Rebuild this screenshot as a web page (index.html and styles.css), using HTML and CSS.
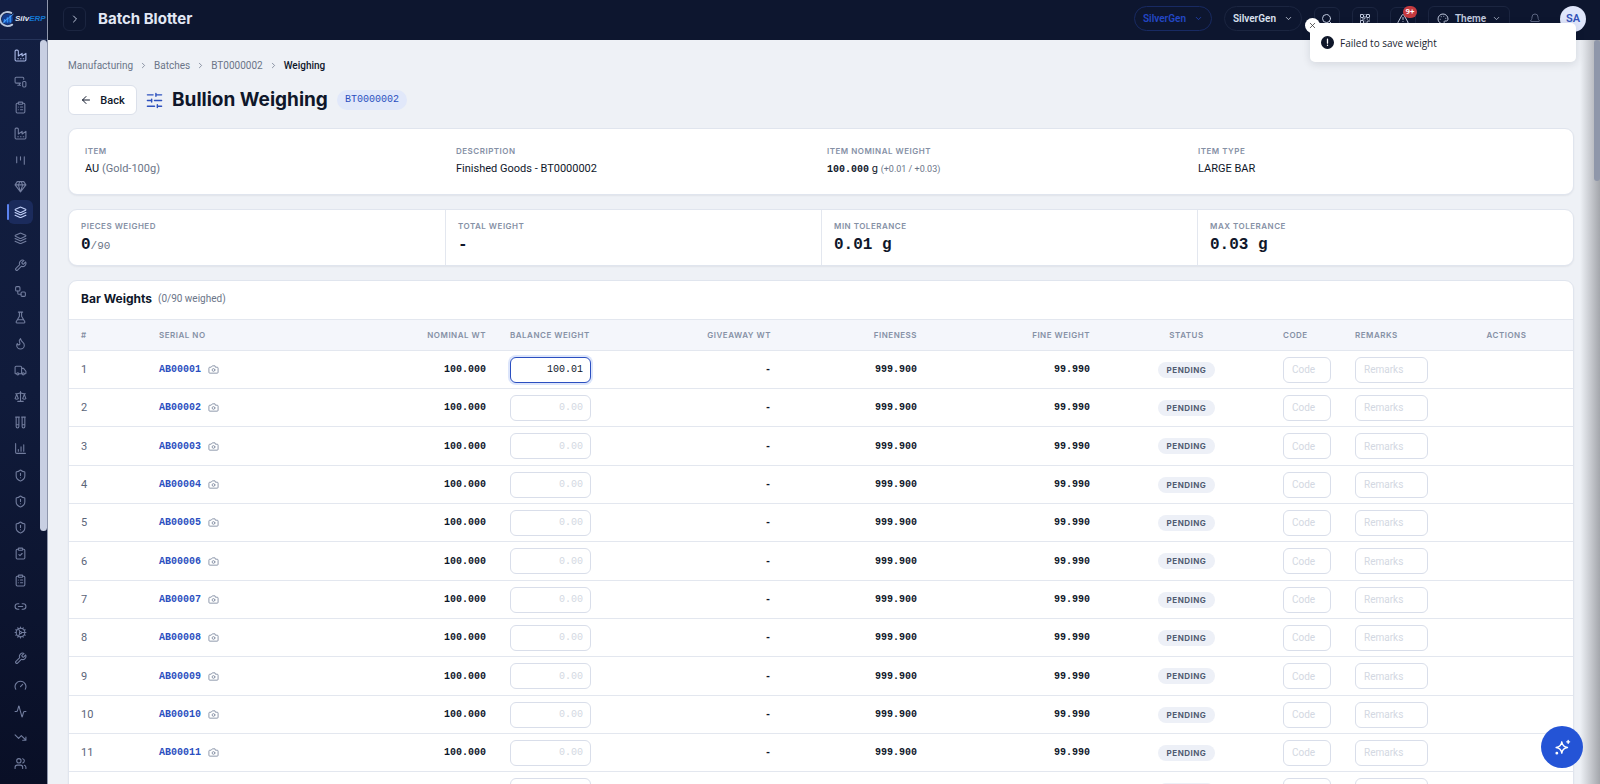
FILE: index.html
```
<!DOCTYPE html>
<html lang="en">
<head>
    <meta charset="UTF-8">
    <meta name="viewport" content="width=device-width, initial-scale=1.0">
    <title>Batch Blotter - Bullion Weighing</title>
    <link rel="stylesheet" href="styles.css">
</head>
<body>
    <aside class="sidebar">
        <a href="#" class="logo" aria-label="SilvERP">
            <svg class="logo-mark" viewBox="0 0 16 18">
                <circle cx="8" cy="9" r="6" fill="#123a8c" stroke="none"/>
                <path d="M12 2.500A8 7.500 0 1 0 13 15" fill="none" stroke="#b9c6dc" stroke-width="2"/>
                <path d="M5 12v-2M8 12V8M11 12V6" stroke="#2f8cf0" stroke-width="2"/>
                <path d="M3 13L14 4" stroke="#4da3ff" stroke-width="1"/>
            </svg>
            <span class="logo-silv">Silv</span><span class="logo-erp">ERP</span>
        </a>
        <div class="side-body">
            <nav class="side-nav" id="sideNav"></nav>
            <div class="side-scroll"><div class="side-thumb"></div></div>
        </div>
    </aside>

    <div class="page">
        <header class="topbar">
            <button class="icon-btn expand" aria-label="Expand menu"><svg viewBox="0 0 24 24"><path d="m9 18 6-6-6-6"/></svg></button>
            <div class="top-title">Batch Blotter</div>
            <div class="top-actions">
                <button class="pill pill-blue">SilverGen <svg viewBox="0 0 24 24"><path d="m6 9 6 6 6-6"/></svg></button>
                <button class="pill">SilverGen <svg viewBox="0 0 24 24"><path d="m6 9 6 6 6-6"/></svg></button>
                <button class="icon-btn" aria-label="Search"><svg viewBox="0 0 24 24"><circle cx="11" cy="11" r="8"/><path d="m21 21-4.300-4.300"/></svg></button>
                <button class="icon-btn" aria-label="Scan"><svg viewBox="0 0 24 24"><rect x="3" y="3" width="6" height="6" rx="1"/><rect x="15" y="3" width="6" height="6" rx="1"/><rect x="3" y="15" width="6" height="6" rx="1"/><path d="M21 16h-3a2 2 0 0 0-2 2v3M21 21v.01M12 7v3a2 2 0 0 1-2 2H7M3 12h.01M12 3h.01M12 16v.01M16 12h1M21 12v.01M12 21v-1"/></svg></button>
                <button class="icon-btn" aria-label="Alerts"><svg viewBox="0 0 24 24"><path d="m21.730 18-8-14a2 2 0 0 0-3.480 0l-8 14A2 2 0 0 0 4 21h16a2 2 0 0 0 1.730-3M12 9v4M12 17h.01"/></svg><span class="badge">9+</span></button>
                <button class="theme-btn"><svg viewBox="0 0 24 24"><path d="M12 22a10 10 0 1 1 10-10c0 3-2 4-4 4h-2a2 2 0 0 0-1.500 3.300c.8 1 .2 2.700-2.500 2.700z"/><path d="M13.500 6.500v.01M17.500 10.500v.01M6.500 12.500v.01M8.500 7.500v.01"/></svg>Theme<svg viewBox="0 0 24 24"><path d="m6 9 6 6 6-6"/></svg></button>
                <button class="bell" aria-label="Notifications"><svg viewBox="0 0 24 24"><path d="M10.300 21a2 2 0 0 0 3.400 0M3.300 15.300A1 1 0 0 0 4 17h16a1 1 0 0 0 .7-1.700C19.400 14 18 12.500 18 8A6 6 0 0 0 6 8c0 4.500-1.400 6-2.700 7.300"/></svg></button>
                <button class="avatar">SA</button>
            </div>
        </header>

        <main class="content">
            <nav class="breadcrumb" aria-label="Breadcrumb">
                <a href="#">Manufacturing</a><svg viewBox="0 0 24 24"><path d="m9 18 6-6-6-6"/></svg>
                <a href="#">Batches</a><svg viewBox="0 0 24 24"><path d="m9 18 6-6-6-6"/></svg>
                <a href="#">BT0000002</a><svg viewBox="0 0 24 24"><path d="m9 18 6-6-6-6"/></svg>
                <span class="current">Weighing</span>
            </nav>

            <div class="heading">
                <button class="back-btn"><svg viewBox="0 0 24 24"><path d="m12 19-7-7 7-7M19 12H5"/></svg>Back</button>
                <svg class="heading-icon" viewBox="0 0 24 24"><path d="M10 4H2M22 4h-8M14 2v4M8 12H2M22 12H12M8 10v4M12 20H2M22 20h-6M16 18v4"/></svg>
                <h1>Bullion Weighing</h1>
                <span class="batch-tag">BT0000002</span>
            </div>

            <section class="card info">
                <div><div class="label">ITEM</div><div class="value">AU <span class="muted">(Gold-100g)</span></div></div>
                <div><div class="label">DESCRIPTION</div><div class="value">Finished Goods - BT0000002</div></div>
                <div><div class="label">ITEM NOMINAL WEIGHT</div><div class="value"><span class="mono">100.000</span> g <small>(+0.01 / +0.03)</small></div></div>
                <div><div class="label">ITEM TYPE</div><div class="value">LARGE BAR</div></div>
            </section>

            <section class="card stats">
                <div><div class="label">PIECES WEIGHED</div><div class="stat">0<small>/90</small></div></div>
                <div><div class="label">TOTAL WEIGHT</div><div class="stat">-</div></div>
                <div><div class="label">MIN TOLERANCE</div><div class="stat">0.01 g</div></div>
                <div><div class="label">MAX TOLERANCE</div><div class="stat">0.03 g</div></div>
            </section>

            <section class="card bars">
                <div class="bars-head"><h2>Bar Weights</h2><span>(0/90 weighed)</span></div>
                <table>
                    <thead>
                        <tr>
                            <th class="c-no">#</th>
                            <th class="c-serial">SERIAL NO</th>
                            <th class="c-nominal num">NOMINAL WT</th>
                            <th class="c-balance">BALANCE WEIGHT</th>
                            <th class="c-give num">GIVEAWAY WT</th>
                            <th class="c-fineness num">FINENESS</th>
                            <th class="c-fine num">FINE WEIGHT</th>
                            <th class="c-status mid">STATUS</th>
                            <th class="c-code">CODE</th>
                            <th class="c-remarks">REMARKS</th>
                            <th class="c-actions mid">ACTIONS</th>
                        </tr>
                    </thead>
                    <tbody id="barRows"></tbody>
                </table>
            </section>
        </main>
        <div class="page-scroll"><div class="page-thumb"></div></div>
    </div>

    <div class="toast" role="alert">
        <button class="toast-close" aria-label="Close"><svg viewBox="0 0 24 24"><path d="M18 6 6 18M6 6l12 12"/></svg></button>
        <svg class="toast-icon" viewBox="0 0 20 20"><circle cx="10" cy="10" r="9"/><path d="M10 5v6M10 14v.5"/></svg>
        <span>Failed to save weight</span>
    </div>

    <button class="assist" aria-label="Assistant"><svg viewBox="0 0 24 24"><path d="M11 4c.8 5.300 2.700 7.200 8 8-5.300.8-7.200 2.700-8 8-.8-5.300-2.700-7.200-8-8 5.300-.8 7.200-2.700 8-8zM20 2v4M22 4h-4"/><circle cx="4" cy="20" r="1"/></svg></button>

    <script src="script.js"></script>
</body>
</html>
```
FILE: styles.css
```
* {
    box-sizing: border-box;
}

body {
    margin: 0;
    height: 100vh;
    display: flex;
    overflow: hidden;
    background-color: #eef1f6;
    color: #0f172a;
    font-family: 'Roboto', sans-serif;
    font-size: 11px;
}

button, input {
    font-family: inherit;
    margin: 0;
}

button {
    cursor: pointer;
}

svg {
    fill: none;
    stroke: currentColor;
    stroke-width: 2;
    stroke-linecap: round;
    stroke-linejoin: round;
    flex: none;
}

a {
    color: inherit;
    text-decoration: none;
}

h1, h2 {
    margin: 0;
    font-family: 'Inter', sans-serif;
    font-weight: 700;
}

/* Sidebar */
.sidebar {
    width: 48px;
    flex: none;
    display: flex;
    flex-direction: column;
    background: linear-gradient(#131f42, #101b3b 50%, #090f26);
    border-right: 1px solid #8f97ac;
}

.logo {
    height: 40px;
    flex: none;
    display: flex;
    align-items: center;
    padding-bottom: 2px;
    border-bottom: 1px solid #26345a;
    background-color: #131e41;
    font-family: 'Liberation Sans', sans-serif;
    font-size: 8px;
    font-style: italic;
    font-weight: 700;
}

.logo-mark {
    width: 15px;
    height: 18px;
}

.logo-silv {
    color: #e2e8f3;
}

.logo-erp {
    color: #1478d4;
}

.side-body {
    flex: 1;
    min-height: 0;
    display: flex;
}

.side-nav {
    flex: 1;
    overflow: hidden;
    padding: 3px 0 0 8px;
}

.side-link {
    position: relative;
    display: flex;
    align-items: center;
    justify-content: center;
    width: 25px;
    height: 24px;
    margin-bottom: 2px;
    border-radius: 6px;
    color: #727d9e;
}

.side-link:nth-child(4n) {
    margin-bottom: 3px;
}

.side-link svg {
    width: 13px;
    height: 13px;
}

.side-link.open {
    color: #a9b8e6;
}

.side-link.active {
    background-color: #1b2b5c;
    color: #c3d1fa;
}

.side-link.active::before {
    content: "";
    position: absolute;
    left: -1px;
    top: 4px;
    width: 2px;
    height: 16px;
    border-radius: 2px;
    background-color: #5b83f0;
}

.side-scroll {
    width: 7px;
}

.side-thumb {
    height: 66%;
    border-radius: 4px;
    background-color: #c8cfe2;
}

/* Top bar */
.page {
    flex: 1;
    min-width: 0;
    position: relative;
    display: flex;
    flex-direction: column;
}

.topbar {
    height: 40px;
    flex: none;
    display: flex;
    align-items: center;
    padding: 0 14px 3px 15px;
    background-color: #0d162f;
    color: #e2e8f5;
}

.topbar button {
    display: flex;
    align-items: center;
    justify-content: center;
    background: none;
    color: #c0c9de;
    border: 1px solid #1b2540;
    font-size: 10px;
    font-weight: 600;
    padding: 0;
}

.topbar svg {
    width: 12px;
    height: 12px;
}

.topbar .icon-btn {
    position: relative;
    width: 26px;
    height: 24px;
    border-radius: 6px;
}

.topbar .expand {
    width: 23px;
}

.top-title {
    margin-left: 12px;
    font-family: 'Inter', sans-serif;
    font-size: 15px;
    font-weight: 700;
}

.top-actions {
    margin-left: auto;
    display: flex;
    align-items: center;
    gap: 12px;
}

.topbar .pill {
    height: 25px;
    width: 78px;
    gap: 8px;
    border-radius: 13px;
    color: #dbe2f0;
}

.topbar .pill svg, .theme-btn svg:last-child {
    width: 9px;
    height: 9px;
}

.topbar .pill-blue {
    color: #2347c5;
    border-color: #182a62;
}

.topbar .theme-btn {
    width: 82px;
    height: 26px;
    gap: 6px;
    border-radius: 6px;
}

.badge {
    position: absolute;
    top: -2px;
    right: -2px;
    min-width: 14px;
    height: 12px;
    border-radius: 6px;
    background-color: #c53a3f;
    color: #fff;
    font-size: 8px;
    line-height: 12px;
}

.topbar .bell {
    width: 26px;
    border: none;
    color: #5b6580;
}

.topbar .avatar {
    width: 26px;
    height: 26px;
    border: none;
    border-radius: 50%;
    background-color: #dfe6fb;
    color: #3151b8;
    font-size: 11px;
}

/* Content */
.content {
    flex: 1;
    min-height: 0;
    overflow: auto;
    scrollbar-width: none;
    padding: 16px 26px 0 20px;
}

.breadcrumb {
    display: flex;
    align-items: center;
    gap: 6px;
    height: 18px;
    color: #6b7588;
    font-size: 10px;
}

.breadcrumb svg {
    width: 9px;
    height: 9px;
}

.breadcrumb .current {
    color: #0f172a;
    font-weight: 500;
}

.heading {
    display: flex;
    align-items: center;
    gap: 9px;
    height: 30px;
    margin: 11px 0 13px;
}

.back-btn {
    display: flex;
    align-items: center;
    justify-content: center;
    gap: 8px;
    width: 69px;
    height: 30px;
    padding: 0;
    border: 1px solid #dbe0ea;
    border-radius: 6px;
    background-color: #fff;
    color: #0f172a;
    font-size: 11px;
    font-weight: 500;
}

.back-btn svg {
    width: 12px;
    height: 12px;
}

.heading-icon {
    width: 17px;
    height: 17px;
    color: #2d51be;
}

.heading h1 {
    font-size: 19px;
    line-height: 28px;
}

.batch-tag {
    padding: 0 8px;
    border-radius: 10px;
    background-color: #e1e8fa;
    color: #2b4fc0;
    font-family: 'Liberation Mono', monospace;
    font-size: 10px;
    line-height: 20px;
}

.card {
    margin-bottom: 14px;
    border: 1px solid #e0e5ee;
    border-radius: 9px;
    background-color: #fff;
    box-shadow: 0 1px 2px rgba(15, 23, 42, 0.06);
}

.label, th {
    color: #8590a5;
    font-family: 'Inter', sans-serif;
    font-size: 8px;
    font-weight: 600;
    letter-spacing: 0.5px;
}

.label {
    line-height: 12px;
}

.mono, .stat, td.num {
    font-family: 'Liberation Mono', monospace;
}

.mono {
    font-size: 10px;
    font-weight: 700;
}

.info {
    display: grid;
    grid-template-columns: repeat(4, 1fr);
    gap: 12px;
    padding: 16px;
}

.value {
    margin-top: 4px;
    line-height: 16px;
}

.muted, .value small {
    color: #6b7588;
}

.value small {
    font-size: 9px;
}

.stats {
    display: grid;
    grid-template-columns: repeat(4, 1fr);
}

.stats > div {
    padding: 10px 12px 8px;
}

.stats > div + div {
    border-left: 1px solid #e3e7ef;
}

.stat {
    margin-top: 2px;
    font-size: 16px;
    font-weight: 700;
    line-height: 22px;
}

.stat small {
    color: #6b7588;
    font-size: 11px;
    font-weight: 400;
}

.bars {
    overflow: hidden;
}

.bars-head {
    display: flex;
    align-items: center;
    gap: 6px;
    padding: 9px 12px 11px;
    line-height: 18px;
}

.bars-head h2 {
    font-size: 12px;
}

.bars-head span {
    color: #6b7588;
    font-size: 10px;
}

table {
    width: 100%;
    table-layout: fixed;
    border-collapse: separate;
    border-spacing: 0;
}

th, td {
    padding: 0 12px;
    text-align: left;
    white-space: nowrap;
    border-bottom: 1px solid #e3e7ef;
}

th {
    height: 32px;
    border-top: 1px solid #e3e7ef;
    background-color: #f4f6fb;
}

td {
    height: 38px;
}

tbody tr:nth-child(3n) td {
    height: 39px;
}

.c-no { width: 78px; }
.c-serial { width: 208px; }
.c-nominal { width: 143px; }
.c-balance { width: 105px; }
.c-give { width: 180px; }
.c-fineness { width: 146px; }
.c-fine { width: 173px; }
.c-status { width: 169px; }
.c-code { width: 72px; }
.c-remarks { width: 97px; }
.c-actions { width: 133px; }

.num {
    text-align: right;
}

.mid {
    text-align: center;
}

td.num {
    font-size: 10px;
    font-weight: 700;
}

td.row-no {
    color: #5b6579;
}

.serial {
    display: flex;
    align-items: center;
    gap: 7px;
    color: #2b4fc0;
    font-family: 'Liberation Mono', monospace;
    font-size: 10px;
    font-weight: 700;
}

.serial svg {
    width: 11px;
    height: 11px;
    color: #8590a5;
}

.status {
    display: inline-block;
    padding: 0 9px;
    border-radius: 8px;
    background-color: #edf0f7;
    color: #515c72;
    font-family: 'Inter', sans-serif;
    font-size: 8px;
    font-weight: 700;
    letter-spacing: 0.5px;
    line-height: 16px;
}

td input {
    display: block;
    width: 100%;
    height: 26px;
    padding: 0 8px;
    border: 1px solid #d9deea;
    border-radius: 6px;
    background-color: #fff;
    color: #0f172a;
    font-size: 10px;
    outline: none;
}

td input::placeholder {
    color: #d3d8e2;
}

td input.weight {
    padding: 0 7px;
    font-family: 'Liberation Mono', monospace;
    text-align: right;
}

td input.weight:focus {
    border-color: #2b4fc0;
    box-shadow: 0 0 0 2px #dce5fb;
}

/* Right edge */
.page-scroll {
    position: absolute;
    top: 40px;
    right: 0;
    bottom: 0;
    width: 20px;
    background: linear-gradient(to right, rgba(90, 92, 98, 0), rgba(90, 92, 98, 0.5));
}

.page-thumb {
    width: 6px;
    height: 19%;
    margin-left: auto;
    border-radius: 3px;
    background-color: #8f97aa;
}

.toast {
    position: absolute;
    top: 23px;
    right: 24px;
    display: flex;
    align-items: center;
    gap: 6px;
    width: 266px;
    height: 39px;
    padding: 0 11px;
    border-radius: 5px;
    background-color: #fff;
    box-shadow: 0 2px 8px rgba(15, 23, 42, 0.12);
    color: #20242e;
    font-family: 'Open Sans', sans-serif;
    font-size: 10px;
    font-weight: 500;
}

.toast-icon {
    width: 13px;
    height: 13px;
    color: #fff;
}

.toast-icon circle {
    fill: #0f172a;
    stroke: #0f172a;
}

.toast-close {
    position: absolute;
    top: -5px;
    left: -5px;
    display: flex;
    align-items: center;
    justify-content: center;
    width: 15px;
    height: 15px;
    padding: 0;
    border: none;
    border-radius: 50%;
    background-color: #fff;
    color: #333;
}

.toast-close svg {
    width: 9px;
    height: 9px;
}

.assist {
    position: absolute;
    right: 17px;
    bottom: 16px;
    display: flex;
    align-items: center;
    justify-content: center;
    width: 42px;
    height: 42px;
    padding: 0;
    border: none;
    border-radius: 50%;
    background-color: #2454d6;
    color: #fff;
}

.assist svg {
    width: 17px;
    height: 17px;
}
```
FILE: script.js
```
const icons = {
    factory: '<path d="M2 20a2 2 0 0 0 2 2h16a2 2 0 0 0 2-2V8l-7 5V8l-7 5V4a2 2 0 0 0-2-2H4a2 2 0 0 0-2 2zM17 18h1M12 18h1M7 18h1"/>',
    devices: '<path d="M18 8V6a2 2 0 0 0-2-2H4a2 2 0 0 0-2 2v7a2 2 0 0 0 2 2h8M10 19v-4M7 19h5"/><rect x="16" y="12" width="6" height="10" rx="2"/>',
    list: '<rect x="8" y="2" width="8" height="4" rx="1"/><path d="M16 4h2a2 2 0 0 1 2 2v14a2 2 0 0 1-2 2H6a2 2 0 0 1-2-2V6a2 2 0 0 1 2-2h2M12 11h4M12 16h4M8 11h.01M8 16h.01"/>',
    kanban: '<path d="M5 5v11M12 5v6M19 5v14"/>',
    gem: '<path d="M6 3h12l4 6-10 13L2 9zM11 3 8 9l4 13 4-13-3-6M2 9h20"/>',
    layers: '<path d="m12.800 2.200a2 2 0 0 0-1.600 0L2.600 6.100a1 1 0 0 0 0 1.800l8.600 3.900a2 2 0 0 0 1.600 0l8.600-3.900a1 1 0 0 0 0-1.800zM2 12l9.200 4.200a2 2 0 0 0 1.600 0L22 12M2 17l9.200 4.200a2 2 0 0 0 1.600 0L22 17"/>',
    wrench: '<path d="M14.700 6.300a1 1 0 0 0 0 1.400l1.600 1.600a1 1 0 0 0 1.400 0l3.770-3.770a6 6 0 0 1-7.940 7.940l-6.910 6.910a2.120 2.120 0 0 1-3-3l6.910-6.910a6 6 0 0 1 7.940-7.940z"/>',
    workflow: '<rect x="3" y="3" width="8" height="8" rx="2"/><path d="M7 11v4a2 2 0 0 0 2 2h4"/><rect x="13" y="13" width="8" height="8" rx="2"/>',
    flask: '<path d="M10 2v7.500L4 20a1.500 1.500 0 0 0 1.300 2h13.400a1.500 1.500 0 0 0 1.300-2L14 9.500V2M8 2h8M7 16h10"/>',
    flame: '<path d="M8.500 14.500A2.500 2.500 0 0 0 11 12c0-1.400-.5-2-1-3-1-2.100-.2-4 2-6 .5 2.500 2 4.900 4 6.500s3 3.500 3 5.500a7 7 0 1 1-14 0c0-1.200.4-2.300 1-3a2.500 2.500 0 0 0 2.500 2.500z"/>',
    truck: '<path d="M14 18V6a2 2 0 0 0-2-2H4a2 2 0 0 0-2 2v11a1 1 0 0 0 1 1h2M15 18H9M19 18h2a1 1 0 0 0 1-1v-3.600L18.300 9a1 1 0 0 0-.8-1H14"/><circle cx="17" cy="18" r="2"/><circle cx="7" cy="18" r="2"/>',
    scale: '<path d="m16 16 3-8 3 8c-2 1.300-4 1.300-6 0zM2 16l3-8 3 8c-2 1.300-4 1.300-6 0zM7 21h10M12 3v18M3 7h2c2 0 5-1 7-2 2 1 5 2 7 2h2"/>',
    tubes: '<path d="M9 2v17.500a2.500 2.500 0 0 1-5 0V2M20 2v17.500a2.500 2.500 0 0 1-5 0V2M3 2h7M14 2h7M9 16H4M20 16h-5"/>',
    chart: '<path d="M3 3v16a2 2 0 0 0 2 2h16M8 17v-3M13 17V9M18 17V5"/>',
    shield: '<path d="M20 13c0 5-3.500 7.500-7.700 9-.2.1-.4.1-.6 0C7.500 20.500 4 18 4 13V6a1 1 0 0 1 1-1c2 0 4.500-1.200 6.200-2.700a1.200 1.200 0 0 1 1.600 0C14.500 3.800 17 5 19 5a1 1 0 0 1 1 1zM12 8v4M12 16h.01"/>',
    check: '<rect x="8" y="2" width="8" height="4" rx="1"/><path d="M16 4h2a2 2 0 0 1 2 2v14a2 2 0 0 1-2 2H6a2 2 0 0 1-2-2V6a2 2 0 0 1 2-2h2M9 14l2 2 4-4"/>',
    link: '<path d="M9 17H7A5 5 0 0 1 7 7h2M15 7h2a5 5 0 1 1 0 10h-2M8 12h8"/>',
    cog: '<circle cx="12" cy="12" r="8"/><circle cx="12" cy="12" r="2"/><path d="M12 2v2M12 22v-2M14 12h8M11 10.300 7 3.300M11 13.700l-4 7M17 20.700l-1-1.700M17 3.300 16 5M2 12h2M20.700 17l-1.700-1M3.300 7 5 8M20.700 7 19 8M3.300 17 5 16"/>',
    gauge: '<path d="m12 14 4-4M3.300 19a10 10 0 1 1 17.400 0"/>',
    activity: '<path d="M22 12h-2.500a2 2 0 0 0-1.900 1.500L15.200 21.800a.25.25 0 0 1-.5 0L9.200 2.200a.25.25 0 0 0-.5 0L6.400 10.500A2 2 0 0 1 4.500 12H2"/>',
    trend: '<path d="m22 17-8.500-8.500-5 5L2 7M16 17h6v-6"/>',
    users: '<path d="M16 21v-2a4 4 0 0 0-4-4H6a4 4 0 0 0-4 4v2M22 21v-2a4 4 0 0 0-3-3.900M16 3.100a4 4 0 0 1 0 7.800"/><circle cx="9" cy="7" r="4"/>',
    camera: '<path d="M14.500 4h-5L7 7H4a2 2 0 0 0-2 2v9a2 2 0 0 0 2 2h16a2 2 0 0 0 2-2V9a2 2 0 0 0-2-2h-3z"/><circle cx="12" cy="13" r="3"/>'
};

const menu = ['factory', 'devices', 'list', 'factory', 'kanban', 'gem', 'layers', 'layers', 'wrench',
    'workflow', 'flask', 'flame', 'truck', 'scale', 'tubes', 'chart', 'shield', 'shield', 'shield',
    'check', 'list', 'link', 'cog', 'wrench', 'gauge', 'activity', 'trend', 'users', 'list'];

function icon(name) {
    return `<svg viewBox="0 0 24 24">${icons[name]}</svg>`;
}

document.getElementById('sideNav').innerHTML = menu.map((name, i) => {
    const state = i === 6 ? ' active' : (i === 0 ? ' open' : '');
    return `<a href="#" class="side-link${state}" aria-label="${name}">${icon(name)}</a>`;
}).join('');

const rowCount = 12;
let rows = '';
for (let i = 1; i <= rowCount; i++) {
    const serial = 'AB' + String(i).padStart(5, '0');
    rows += `<tr>
        <td class="row-no">${i}</td>
        <td><a href="#" class="serial">${serial}${icon('camera')}</a></td>
        <td class="num">100.000</td>
        <td><input type="text" class="weight" placeholder="0.00" aria-label="Balance weight ${serial}"></td>
        <td class="num">-</td>
        <td class="num">999.900</td>
        <td class="num">99.990</td>
        <td class="mid"><span class="status">PENDING</span></td>
        <td><input type="text" placeholder="Code" aria-label="Code ${serial}"></td>
        <td><input type="text" placeholder="Remarks" aria-label="Remarks ${serial}"></td>
        <td></td>
    </tr>`;
}
document.getElementById('barRows').innerHTML = rows;

const firstWeight = document.querySelector('.weight');
firstWeight.value = '100.01';
firstWeight.focus();
```
